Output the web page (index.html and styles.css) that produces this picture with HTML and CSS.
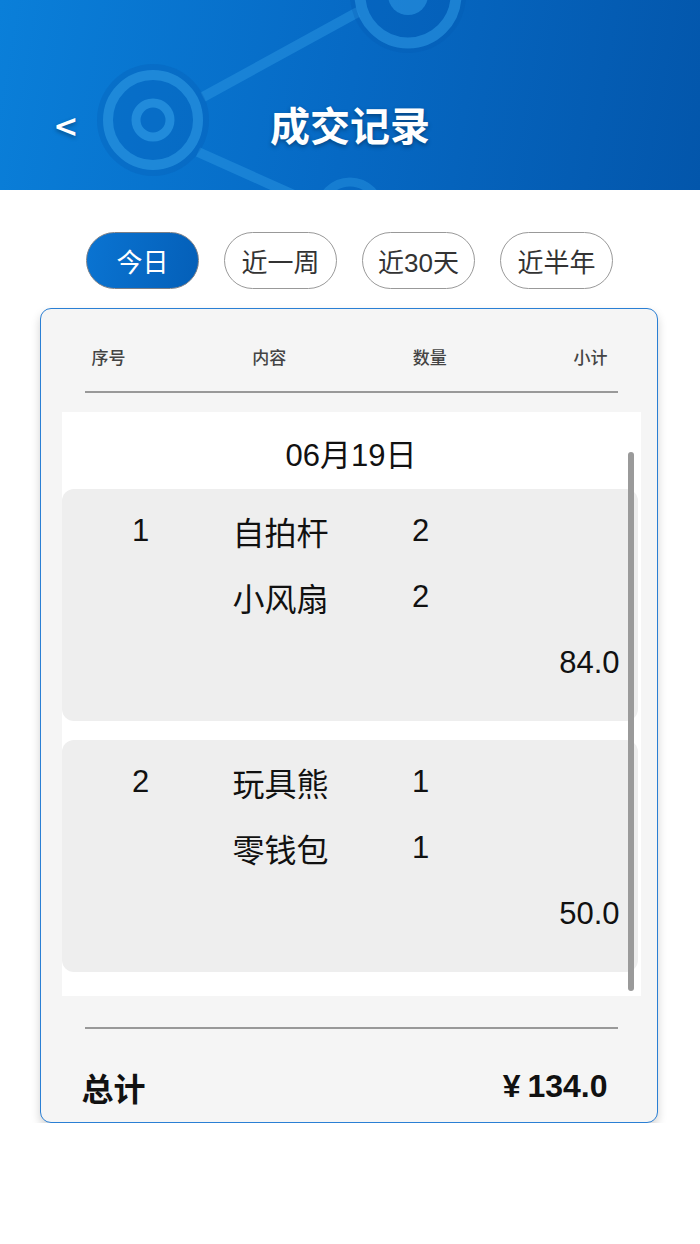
FILE: index.html
```html
<!DOCTYPE html>
<html lang="zh-CN">
<head>
<meta charset="utf-8">
<title>成交记录</title>
<link rel="stylesheet" href="styles.css">
</head>
<body>
<header class="topbar">
  <svg class="deco" width="700" height="190" viewBox="0 0 700 190" aria-hidden="true">
    <g stroke="#2b96e2" fill="none" opacity="0.5">
      <line x1="203" y1="97" x2="358" y2="12" stroke-width="10"/>
      <line x1="198" y1="152" x2="305" y2="200" stroke-width="10"/>
    </g>
    <circle cx="153" cy="120" r="56" fill="#0457b0" opacity="0.25"/>
    <circle cx="153" cy="120" r="45" fill="none" stroke="#2b96e2" stroke-width="10" opacity="0.65"/>
    <circle cx="153" cy="120" r="17" fill="none" stroke="#2b96e2" stroke-width="9" opacity="0.75"/>
    <circle cx="408" cy="-5" r="58" fill="#0457b0" opacity="0.25"/>
    <circle cx="408" cy="-5" r="48" fill="none" stroke="#2b96e2" stroke-width="11" opacity="0.6"/>
    <circle cx="408" cy="-5" r="20" fill="#2b96e2" opacity="0.6"/>
    <circle cx="350" cy="212" r="30" fill="none" stroke="#2b96e2" stroke-width="9" opacity="0.45"/>
  </svg>
  <span class="back">&lt;</span>
  <h1 class="title">成交记录</h1>
</header>

<nav class="tabs">
  <span class="tab active">今日</span>
  <span class="tab">近一周</span>
  <span class="tab">近30天</span>
  <span class="tab">近半年</span>
</nav>

<section class="card">
  <div class="cols">
    <span>序号</span>
    <span>内容</span>
    <span>数量</span>
    <span>小计</span>
  </div>

  <div class="list">
    <div class="date">06月19日</div>

    <div class="order">
      <div class="row"><span class="no">1</span><span class="name">自拍杆</span><span class="qty">2</span></div>
      <div class="row"><span class="no"></span><span class="name">小风扇</span><span class="qty">2</span></div>
      <div class="sub">84.0</div>
    </div>

    <div class="order">
      <div class="row"><span class="no">2</span><span class="name">玩具熊</span><span class="qty">1</span></div>
      <div class="row"><span class="no"></span><span class="name">零钱包</span><span class="qty">1</span></div>
      <div class="sub">50.0</div>
    </div>

    <div class="scrollbar"></div>
  </div>

  <div class="total">
    <span class="total-label">总计</span>
    <span class="total-sum"><span class="yen">¥</span>134.0</span>
  </div>
</section>
</body>
</html>
```

FILE: styles.css
```css
* { box-sizing: border-box; }

body {
  margin: 0;
  background: #ffffff;
  font-family: "Liberation Sans", "Noto Sans CJK SC", sans-serif;
  color: #111;
}

.topbar {
  position: relative;
  height: 190px;
  overflow: hidden;
  background: linear-gradient(100deg, #0a7fd9 0%, #0669c4 50%, #0356ab 100%);
  display: flex;
  align-items: center;
  justify-content: center;
  padding-top: 58px;
}

.deco {
  position: absolute;
  left: 0;
  top: 0;
}

.back {
  position: absolute;
  left: 55px;
  top: 103px;
  font-size: 38px;
  font-weight: 500;
  line-height: 44px;
  color: #fff;
  font-family: "Noto Sans CJK SC", sans-serif;
  text-shadow: 0 2px 4px rgba(0, 0, 0, 0.35);
}

.title {
  position: relative;
  margin: 0;
  font-family: "Noto Sans CJK SC", sans-serif;
  font-size: 40px;
  font-weight: 700;
  line-height: 50px;
  color: #fff;
  text-shadow: 0 2px 4px rgba(0, 0, 0, 0.35);
}

.tabs {
  display: flex;
  gap: 25px;
  margin: 42px 0 0 86px;
}

.tab {
  width: 113px;
  height: 57px;
  border: 1.5px solid #999;
  border-radius: 29px;
  display: flex;
  align-items: center;
  justify-content: center;
  font-family: "Liberation Sans", "Noto Sans CJK SC", sans-serif;
  font-size: 26px;
  color: #333;
  background: #fff;
}

.tab.active {
  background: linear-gradient(100deg, #0a74d2, #045fb8);
  border-color: #7a7f88;
  color: #fff;
}

.card {
  width: 618px;
  margin: 19px 0 0 40px;
  border: 1.5px solid #2a7fd4;
  border-radius: 11px;
  background: #f5f5f5;
  box-shadow: 0 5px 10px rgba(0, 0, 0, 0.18);
}

.cols {
  margin: 0 39.5px 0 43.5px;
  padding: 36px 10px 22px 7px;
  border-bottom: 2px solid #999;
  display: flex;
  justify-content: space-between;
  font-family: "Noto Sans CJK SC", sans-serif;
  font-size: 17px;
  font-weight: 500;
  line-height: 24px;
  color: #444;
}

.list {
  position: relative;
  margin: 19px 16.5px 0 20.5px;
  background: #fff;
  padding-bottom: 24px;
}

.date {
  padding-top: 22px;
  height: 66px;
  margin-bottom: 11px;
  text-align: center;
  font-size: 31px;
  line-height: 44px;
  color: #111;
}

.order {
  width: 576px;
  height: 232px;
  background: #eeeeee;
  border-radius: 12px;
  padding: 9px 18px 0 0;
}

.order + .order {
  margin-top: 19px;
}

.row {
  display: grid;
  grid-template-columns: 158px 160px 82px;
  height: 66px;
  align-items: center;
  font-size: 31px;
}

.no, .qty { text-align: center; }

.name {
  padding-left: 13px;
  font-family: "Noto Sans CJK SC", sans-serif;
  font-size: 32px;
}

.sub {
  height: 66px;
  line-height: 66px;
  text-align: right;
  font-size: 31px;
}

.scrollbar {
  position: absolute;
  left: 566px;
  top: 40px;
  width: 6px;
  height: 539px;
  border-radius: 3px;
  background: #9a9a9a;
}

.total {
  margin: 31px 0 0 0;
  padding: 24px 49.5px 0 40.5px;
  position: relative;
  height: 95px;
  display: flex;
  justify-content: space-between;
  align-items: center;
  font-size: 32px;
  font-weight: 700;
  color: #111;
}

.total-label {
  font-family: "Noto Sans CJK SC", sans-serif;
}

.yen {
  margin-right: 7px;
}

.total::before {
  content: "";
  position: absolute;
  left: 43.5px;
  right: 39.5px;
  top: 0;
  border-top: 2px solid #999;
}
```
